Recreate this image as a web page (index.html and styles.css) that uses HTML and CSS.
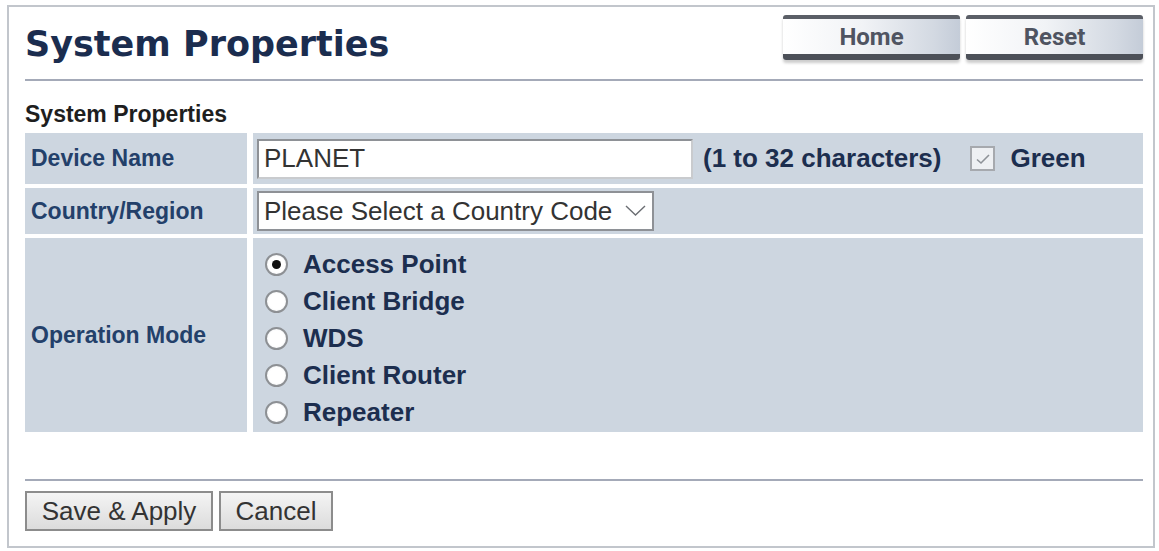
FILE: index.html
```html
<!DOCTYPE html>
<html lang="en">
<head>
    <meta charset="UTF-8">
    <title>System Properties</title>
    <link rel="stylesheet" href="styles.css">
</head>
<body>
    <div class="frame">
        <div class="header">
            <h1>System Properties</h1>
            <div class="nav">
                <button class="nav-btn">Home</button>
                <button class="nav-btn">Reset</button>
            </div>
        </div>

        <div class="section-title">System Properties</div>
        <div class="props">
            <div class="label">Device Name</div>
            <div class="field">
                <input type="text" class="text-input" value="PLANET">
                <span class="hint">(1 to 32 characters)</span>
                <span class="check"><svg width="16" height="12" viewBox="0 0 16 12"><path d="M2 6.5 L6 10 L14 2" fill="none" stroke="#8e9298" stroke-width="1.6"/></svg></span>
                <span class="hint">Green</span>
            </div>

            <div class="label">Country/Region</div>
            <div class="field">
                <div class="select">
                    <span>Please Select a Country Code</span>
                    <svg width="21" height="12" viewBox="0 0 21 12"><path d="M1 1 L10.5 10 L20 1" fill="none" stroke="#6b6e73" stroke-width="1.4"/></svg>
                </div>
            </div>

            <div class="label">Operation Mode</div>
            <div class="field modes">
                <div class="mode"><span class="radio checked"></span>Access Point</div>
                <div class="mode"><span class="radio"></span>Client Bridge</div>
                <div class="mode"><span class="radio"></span>WDS</div>
                <div class="mode"><span class="radio"></span>Client Router</div>
                <div class="mode"><span class="radio"></span>Repeater</div>
            </div>
        </div>

        <div class="footer">
            <button class="form-btn save">Save &amp; Apply</button>
            <button class="form-btn cancel">Cancel</button>
        </div>
    </div>
</body>
</html>
```

FILE: styles.css
```css
body {
    margin: 0;
    background-color: white;
    font-family: "Liberation Sans", Arial, sans-serif;
}
.frame {
    margin: 5px 0 0 7px;
    width: 1148px;
    height: 543px;
    box-sizing: border-box;
    border: 2px solid #c2c6cc;
    padding: 0 10px 0 16px;
}
.header {
    display: flex;
    justify-content: space-between;
    align-items: flex-start;
    height: 72px;
    border-bottom: 2px solid #a4aab8;
}
h1 {
    margin: 20px 0 0 0;
    font-family: "DejaVu Sans", Verdana, sans-serif;
    font-size: 35px;
    line-height: 35px;
    font-weight: bold;
    color: #1b2d4f;
}
.nav {
    display: flex;
    gap: 6px;
    margin-top: 8px;
}
.nav-btn {
    width: 177px;
    height: 45px;
    box-sizing: border-box;
    border: none;
    border-top: 4px solid #5b5f67;
    border-bottom: 6px solid #4c5058;
    border-radius: 3px;
    background: linear-gradient(to right, #ffffff 0%, #f1f3f6 45%, #d3d9e2 85%, #c4ccd8 100%);
    box-shadow: 0 3px 3px rgba(0,0,0,0.2);
    font-family: Roboto, "Liberation Sans", sans-serif;
    font-size: 24px;
    font-weight: bold;
    color: #4f5461;
    padding: 0;
    line-height: 37px;
}
.section-title {
    margin: 20px 0 6px 0;
    font-size: 23px;
    line-height: 26px;
    font-weight: bold;
    color: #1e1e1e;
}
.props {
    display: grid;
    grid-template-columns: 222px 1fr;
    grid-template-rows: 51px 46px 194px;
    column-gap: 6px;
    row-gap: 4px;
}
.label {
    background-color: #cdd6e0;
    display: flex;
    align-items: center;
    padding-left: 6px;
    font-size: 23px;
    font-weight: bold;
    color: #23406a;
}
.field {
    background-color: #cdd6e0;
    display: flex;
    align-items: center;
    padding-left: 4px;
}
.text-input {
    width: 436px;
    height: 40px;
    box-sizing: border-box;
    border: 2px solid #8e9196;
    border-right-color: #c9cbce;
    border-bottom-color: #c9cbce;
    padding: 0 5px;
    margin: 0;
    font-family: "Liberation Sans", Arial, sans-serif;
    font-size: 26px;
    color: #333;
    background: white;
}
.hint {
    font-size: 26px;
    font-weight: bold;
    color: #1c2e4f;
    margin-left: 10px;
}
.check {
    width: 25px;
    height: 25px;
    box-sizing: border-box;
    border: 2px solid #a6a9ae;
    background-color: #eef0f3;
    margin-left: 29px;
    margin-right: 5px;
    display: flex;
    align-items: center;
    justify-content: center;
}
.select {
    width: 397px;
    height: 40px;
    box-sizing: border-box;
    border: 2px solid #8e9196;
    background: white;
    display: flex;
    align-items: center;
    justify-content: space-between;
    padding: 0 6px 0 5px;
    font-size: 26px;
    color: #333;
}
.modes {
    flex-direction: column;
    align-items: flex-start;
    padding: 8px 0 0 12px;
    justify-content: flex-start;
}
.mode {
    height: 37px;
    display: flex;
    align-items: center;
    font-size: 26px;
    font-weight: bold;
    color: #1c2e4f;
}
.radio {
    width: 23px;
    height: 23px;
    box-sizing: border-box;
    border-radius: 50%;
    border: 2px solid #8d9094;
    background: radial-gradient(circle, #ffffff 55%, #eceef1 100%);
    margin-right: 15px;
    display: flex;
    align-items: center;
    justify-content: center;
}
.radio.checked::after {
    content: "";
    width: 9px;
    height: 9px;
    border-radius: 50%;
    background-color: #111;
}
.footer {
    margin-top: 47px;
    border-top: 2px solid #a4aab8;
    padding-top: 10px;
    display: flex;
    gap: 6px;
}
.form-btn {
    height: 40px;
    box-sizing: border-box;
    border: 2px solid #8c8c8c;
    background: linear-gradient(to bottom, #f4f4f4, #dcdcdc);
    font-family: "Liberation Sans", Arial, sans-serif;
    font-size: 26px;
    color: #333;
    padding: 0;
    margin: 0;
}
.save {
    width: 188px;
}
.cancel {
    width: 114px;
}
```
